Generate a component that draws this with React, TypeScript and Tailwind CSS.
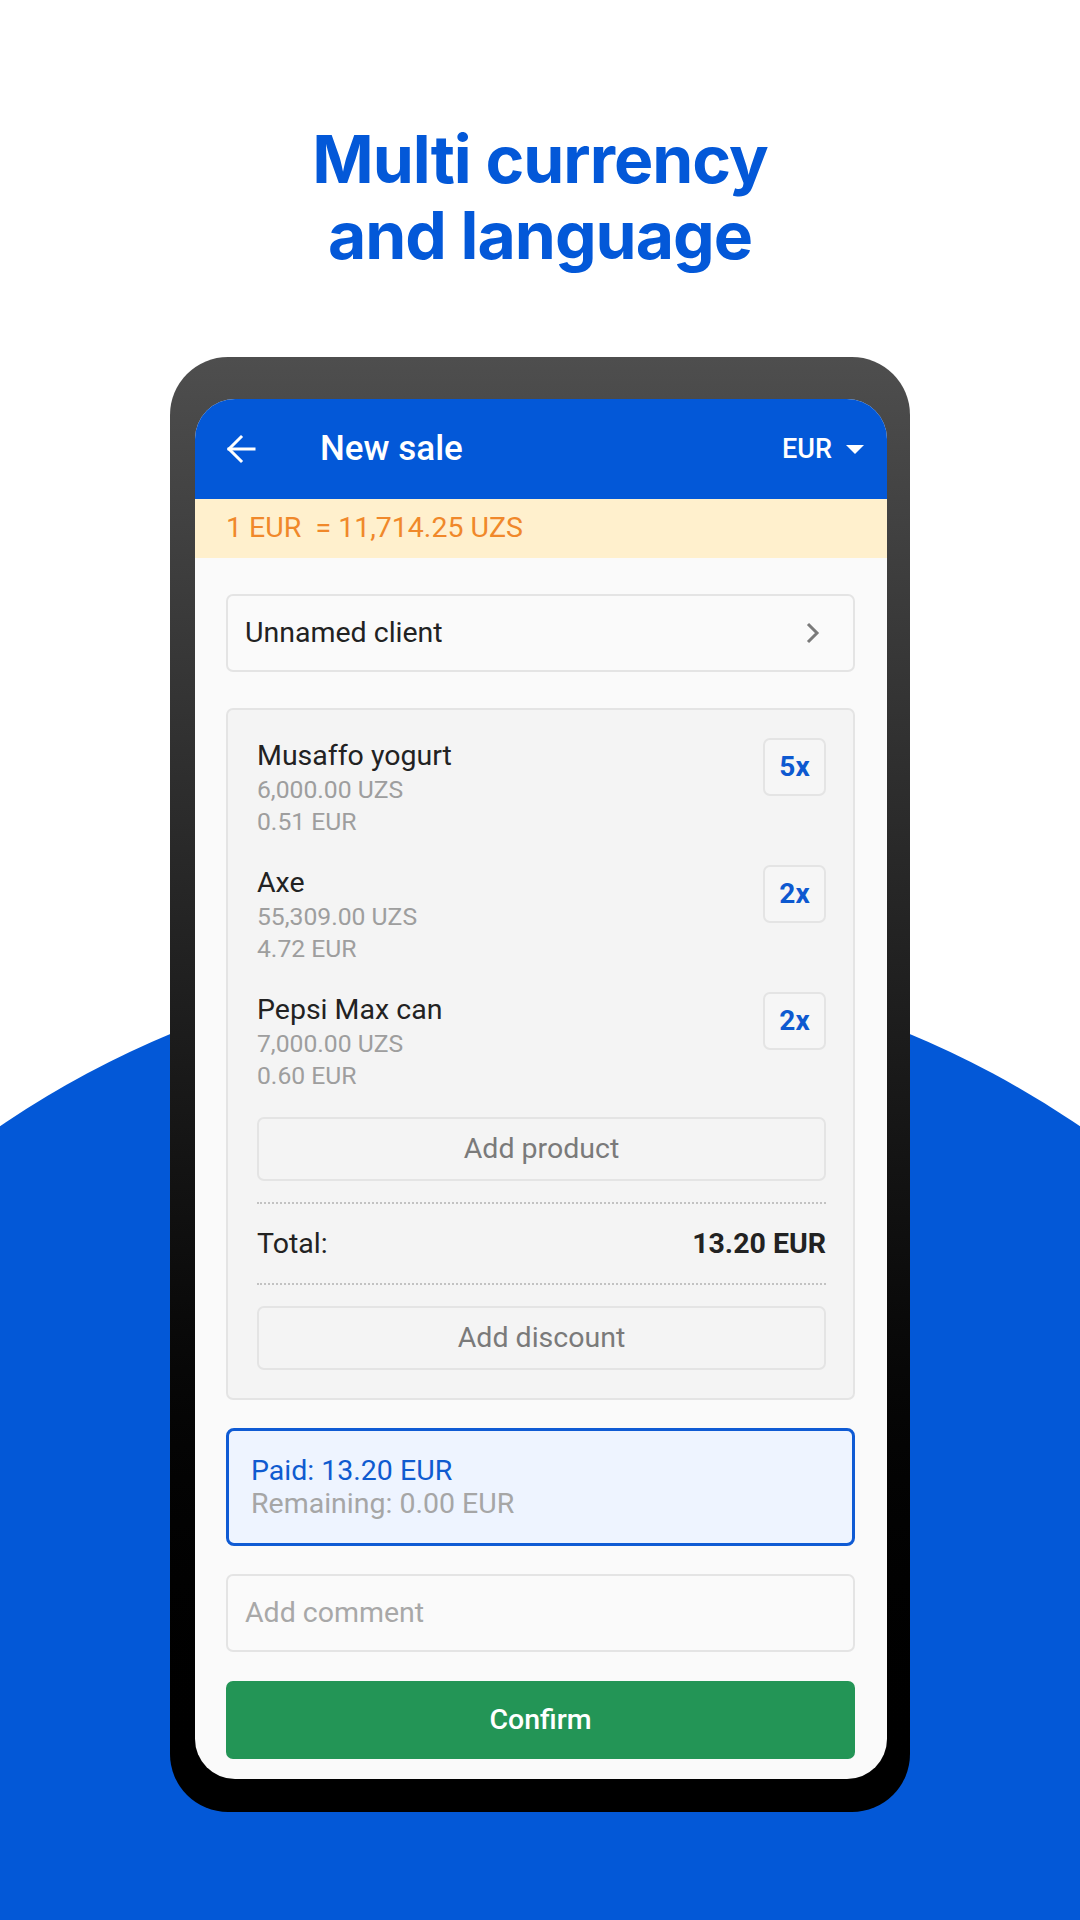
import React from "react";

const items = [
  { name: "Musaffo yogurt", uzs: "6,000.00 UZS", eur: "0.51 EUR", qty: "5x" },
  { name: "Axe", uzs: "55,309.00 UZS", eur: "4.72 EUR", qty: "2x" },
  { name: "Pepsi Max can", uzs: "7,000.00 UZS", eur: "0.60 EUR", qty: "2x" },
];

export default function App() {
  return (
    <div className="relative w-[1080px] h-[1920px] bg-white overflow-hidden">
      <div className="absolute left-[-420px] top-[960px] w-[1920px] h-[1920px] rounded-full bg-[#0358d7]" />
      <div className="relative flex flex-col items-center">
        <h1
          className="pt-[121px] text-center text-[66px] leading-[76px] font-bold text-[#0358d8] tracking-[-1px]"
          style={{ fontFamily: "Inter, 'Noto Sans', sans-serif" }}
        >
          Multi currency
          <br />
          and language
        </h1>
        <div className="mt-[84px] w-[740px] h-[1455px] rounded-[58px] bg-gradient-to-b from-[#4e4e4e] to-[#000000] pt-[42px] pl-[25px] pr-[23px] pb-[33px]">
          <div
            className="w-full h-full rounded-[40px] overflow-hidden bg-[#fafafa] flex flex-col"
            style={{ fontFamily: "Roboto, 'Noto Sans', sans-serif" }}
          >
            <div className="h-[100px] shrink-0 bg-[#0358d8] flex items-center pl-[31px] pr-[23px]">
              <svg width="30" height="30" viewBox="0 0 30 30" fill="none" stroke="white" strokeWidth="3" strokeLinecap="square">
                <path d="M3 15H28" />
                <path d="M15 3L3 15L15 27" strokeLinejoin="miter" />
              </svg>
              <div className="ml-[64px] text-white text-[35px] font-medium">New sale</div>
              <div className="ml-auto flex items-center">
                <span className="text-white text-[27px] font-medium">EUR</span>
                <svg className="ml-[14px]" width="18" height="9" viewBox="0 0 18 9">
                  <path d="M0 0H18L9 9Z" fill="white" />
                </svg>
              </div>
            </div>
            <div className="h-[59px] shrink-0 bg-[#fff0cd] flex items-center pl-[31px] text-[#f0882a] text-[28.5px] whitespace-pre">
              1 EUR  = 11,714.25 UZS
            </div>
            <div className="flex flex-col pl-[31px] pr-[32px] pt-[36px]">
              <div className="h-[78px] border-2 border-[#e4e4e4] rounded-[7px] bg-[#fafafa] flex items-center justify-between pl-[17px] pr-[33px]">
                <span className="text-[28.5px] text-[#222222]">Unnamed client</span>
                <svg width="14" height="22" viewBox="0 0 14 22" fill="none" stroke="#7a7a7a" strokeWidth="3">
                  <path d="M2 2L11 11L2 20" />
                </svg>
              </div>
              <div className="mt-[36px] border-2 border-[#e4e4e4] rounded-[7px] bg-[#f4f4f4] pl-[29px] pr-[27px] pt-[28px] pb-[28px] flex flex-col">
                <div className="flex flex-col gap-[27px]">
                  {items.map((it) => (
                    <div key={it.name} className="flex justify-between items-start">
                      <div className="flex flex-col">
                        <span className="text-[28.5px] leading-[36px] text-[#222222]">{it.name}</span>
                        <span className="text-[24.7px] leading-[32px] text-[#9e9e9e]">{it.uzs}</span>
                        <span className="text-[24.7px] leading-[32px] text-[#9e9e9e]">{it.eur}</span>
                      </div>
                      <div className="w-[63px] h-[58px] border-2 border-[#e4e4e4] rounded-[7px] bg-[#f6f6f6] flex items-center justify-center text-[28px] font-bold text-[#0d59d0]">
                        {it.qty}
                      </div>
                    </div>
                  ))}
                </div>
                <div className="mt-[25px] h-[64px] border-2 border-[#e4e4e4] rounded-[7px] flex items-center justify-center text-[28.5px] text-[#7a7a7a]">
                  Add product
                </div>
                <div className="mt-[21px] border-t-2 border-dotted border-[#c2c2c2]" />
                <div className="mt-[22px] h-[36px] flex items-center justify-between text-[28.5px] text-[#222222]">
                  <span>Total:</span>
                  <span className="font-bold">13.20 EUR</span>
                </div>
                <div className="mt-[21px] border-t-2 border-dotted border-[#c2c2c2]" />
                <div className="mt-[21px] h-[64px] border-2 border-[#e4e4e4] rounded-[7px] flex items-center justify-center text-[28.5px] text-[#7a7a7a]">
                  Add discount
                </div>
              </div>
              <div className="mt-[28px] h-[118px] border-[3px] border-[#0f5bd4] rounded-[8px] bg-[#eef4ff] flex flex-col justify-center pl-[22px]">
                <span className="text-[28.5px] leading-[33px] text-[#0f5bd0]">Paid: 13.20 EUR</span>
                <span className="text-[28.5px] leading-[33px] text-[#a6a6a6]">Remaining: 0.00 EUR</span>
              </div>
              <div className="mt-[28px] h-[78px] border-2 border-[#e4e4e4] rounded-[7px] bg-[#fafafa] flex items-center pl-[17px] text-[28.5px] text-[#a8a8a8]">
                Add comment
              </div>
              <div className="mt-[29px] h-[78px] rounded-[7px] bg-[#239556] flex items-center justify-center text-[28.5px] font-medium text-white">
                Confirm
              </div>
            </div>
          </div>
        </div>
      </div>
    </div>
  );
}
